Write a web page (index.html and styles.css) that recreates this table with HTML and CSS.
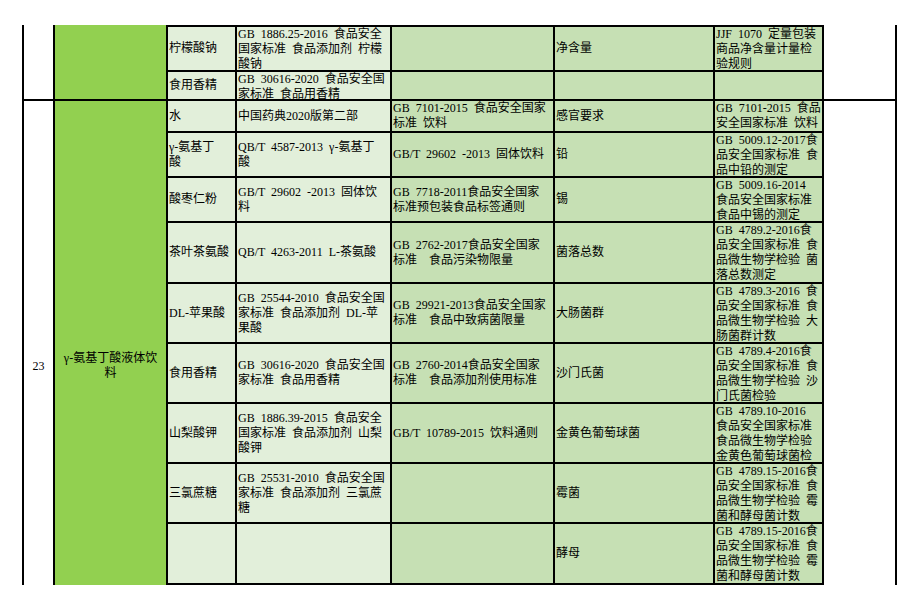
FILE: index.html
```html
<!DOCTYPE html>
<html lang="zh-CN">
<head>
<meta charset="utf-8">
<title>检验标准</title>
<link rel="stylesheet" href="styles.css">
</head>
<body>
<div class="sheet">
  <!-- 上一组（续） -->
  <div class="cell no c1 g1"></div>
  <div class="cell prod c2 g1"></div>
  <div class="cell mat c3 r1">柠檬酸钠</div>
  <div class="cell mat c4 r1 top">GB 1886.25-2016 食品安全<br>国家标准 食品添加剂 柠檬<br>酸钠</div>
  <div class="cell std c5 r1"></div>
  <div class="cell std c6 r1">净含量</div>
  <div class="cell std c7 r1 top">JJF 1070 定量包装<br>商品净含量计量检<br>验规则</div>
  <div class="cell mat c3 r2">食用香精</div>
  <div class="cell mat c4 r2 top">GB 30616-2020 食品安全国<br>家标准 食品用香精</div>
  <div class="cell std c5 r2"></div>
  <div class="cell std c6 r2"></div>
  <div class="cell std c7 r2"></div>
  <div class="cell no c8 g1"></div>

  <!-- 23 γ-氨基丁酸液体饮料 -->
  <div class="cell no c1 g2 shift">23</div>
  <div class="cell prod c2 g2 shift">γ-氨基丁酸液体饮<br>料</div>

  <div class="cell mat c3 r3">水</div>
  <div class="cell mat c4 r3">中国药典2020版第二部</div>
  <div class="cell std c5 r3">GB 7101-2015 食品安全国家<br>标准 饮料</div>
  <div class="cell std c6 r3">感官要求</div>
  <div class="cell std c7 r3">GB 7101-2015 食品<br>安全国家标准 饮料</div>

  <div class="cell mat c3 r4">γ-氨基丁<br>酸</div>
  <div class="cell mat c4 r4">QB/T 4587-2013 γ-氨基丁<br>酸</div>
  <div class="cell std c5 r4">GB/T 29602 -2013 固体饮料</div>
  <div class="cell std c6 r4">铅</div>
  <div class="cell std c7 r4 top">GB 5009.12-2017食<br>品安全国家标准 食<br>品中铅的测定</div>

  <div class="cell mat c3 r5">酸枣仁粉</div>
  <div class="cell mat c4 r5">GB/T 29602 -2013 固体饮<br>料</div>
  <div class="cell std c5 r5">GB 7718-2011食品安全国家<br>标准预包装食品标签通则</div>
  <div class="cell std c6 r5">锡</div>
  <div class="cell std c7 r5 top">GB 5009.16-2014<br>食品安全国家标准<br>食品中锡的测定</div>

  <div class="cell mat c3 r6">茶叶茶氨酸</div>
  <div class="cell mat c4 r6">QB/T 4263-2011 L-茶氨酸</div>
  <div class="cell std c5 r6">GB 2762-2017食品安全国家<br>标准　食品污染物限量</div>
  <div class="cell std c6 r6">菌落总数</div>
  <div class="cell std c7 r6 top">GB 4789.2-2016食<br>品安全国家标准 食<br>品微生物学检验 菌<br>落总数测定</div>

  <div class="cell mat c3 r7">DL-苹果酸</div>
  <div class="cell mat c4 r7">GB 25544-2010 食品安全国<br>家标准 食品添加剂 DL-苹<br>果酸</div>
  <div class="cell std c5 r7">GB 29921-2013食品安全国家<br>标准　食品中致病菌限量</div>
  <div class="cell std c6 r7">大肠菌群</div>
  <div class="cell std c7 r7 top">GB 4789.3-2016 食<br>品安全国家标准 食<br>品微生物学检验 大<br>肠菌群计数</div>

  <div class="cell mat c3 r8">食用香精</div>
  <div class="cell mat c4 r8">GB 30616-2020 食品安全国<br>家标准 食品用香精</div>
  <div class="cell std c5 r8">GB 2760-2014食品安全国家<br>标准　食品添加剂使用标准</div>
  <div class="cell std c6 r8">沙门氏菌</div>
  <div class="cell std c7 r8 top">GB 4789.4-2016食<br>品安全国家标准 食<br>品微生物学检验 沙<br>门氏菌检验</div>

  <div class="cell mat c3 r9">山梨酸钾</div>
  <div class="cell mat c4 r9">GB 1886.39-2015 食品安全<br>国家标准 食品添加剂 山梨<br>酸钾</div>
  <div class="cell std c5 r9">GB/T 10789-2015 饮料通则</div>
  <div class="cell std c6 r9">金黄色葡萄球菌</div>
  <div class="cell std c7 r9 top">GB 4789.10-2016<br>食品安全国家标准<br>食品微生物学检验<br>金黄色葡萄球菌检</div>

  <div class="cell mat c3 r10">三氯蔗糖</div>
  <div class="cell mat c4 r10">GB 25531-2010 食品安全国<br>家标准 食品添加剂 三氯蔗<br>糖</div>
  <div class="cell std c5 r10"></div>
  <div class="cell std c6 r10">霉菌</div>
  <div class="cell std c7 r10 top">GB 4789.15-2016食<br>品安全国家标准 食<br>品微生物学检验 霉<br>菌和酵母菌计数</div>

  <div class="cell mat c3 r11"></div>
  <div class="cell mat c4 r11"></div>
  <div class="cell std c5 r11"></div>
  <div class="cell std c6 r11">酵母</div>
  <div class="cell std c7 r11 top">GB 4789.15-2016食<br>品安全国家标准 食<br>品微生物学检验 霉<br>菌和酵母菌计数</div>

  <div class="cell no c8 g2"></div>
</div>
</body>
</html>
```

FILE: styles.css
```css
* {
  box-sizing: border-box;
}

html,
body {
  margin: 0;
  background: #fff;
}

body {
  font-family: "Liberation Serif", "Noto Sans CJK SC", serif;
  font-size: 12px;
  color: #000;
}

.sheet {
  display: grid;
  width: 875px;
  margin: 25px 0 0 22px;
  padding: 0 2px;
  background: #000;
  grid-template-columns: 29px 111px 67px 153px 161px 158px 107px 71px;
  grid-template-rows: 0 43px 27px 30px 43px 43px 59px 58px 58px 58px 58px 59px 0;
  gap: 2px;
}

.cell {
  display: flex;
  flex-direction: column;
  justify-content: center;
  overflow: hidden;
  padding: 0 1px;
  line-height: 15px;
  white-space: nowrap;
  word-spacing: 3px;
}

.cell.top {
  justify-content: flex-start;
}

.no {
  background: #fff;
  align-items: center;
  text-align: center;
}

.prod {
  background: #92d050;
  align-items: center;
  text-align: center;
}

.mat {
  background: #e2efda;
}

.std {
  background: #c6e0b4;
}

.shift {
  padding-top: 46px;
}

.c1 { grid-column: 1; }
.c2 { grid-column: 2; }
.c3 { grid-column: 3; }
.c4 { grid-column: 4; }
.c5 { grid-column: 5; }
.c6 { grid-column: 6; }
.c7 { grid-column: 7; }
.c8 { grid-column: 8; }

.g1 { grid-row: 1 / 4; }
.g2 { grid-row: 4 / 14; }

.r1 { grid-row: 2; }
.r2 { grid-row: 3; }
.r3 { grid-row: 4; }
.r4 { grid-row: 5; }
.r5 { grid-row: 6; }
.r6 { grid-row: 7; }
.r7 { grid-row: 8; }
.r8 { grid-row: 9; }
.r9 { grid-row: 10; }
.r10 { grid-row: 11; }
.r11 { grid-row: 12; }
```
